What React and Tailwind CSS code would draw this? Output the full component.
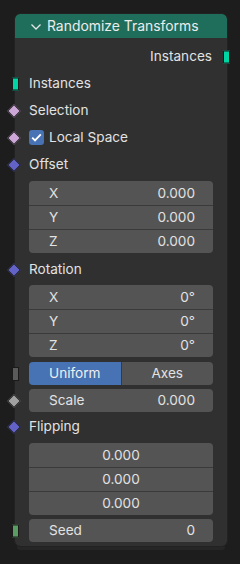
import React from "react";

const font = { fontFamily: "Inter, 'Noto Sans', sans-serif" };

function Diamond({ color }) {
  return (
    <span
      className={`absolute left-[-6px] top-1/2 -translate-y-1/2 w-[10px] h-[10px] rotate-45 border border-[#1a1a1a] ${color}`}
    />
  );
}

function RectSocket({ color, side = "left", h = "h-[13px]" }) {
  const pos = side === "left" ? "left-[-3px]" : "right-[-3px]";
  return (
    <span
      className={`absolute ${pos} top-1/2 -translate-y-1/2 w-[7px] ${h} border border-[#1a1a1a] ${color}`}
    />
  );
}

function LabelRow({ children, socket, mt = "" }) {
  return (
    <div className={`relative h-[27px] flex items-center pl-[14px] ${mt}`}>
      {socket}
      {children}
    </div>
  );
}

function VecBox({ rows, mt }) {
  return (
    <div className={`mx-[14px] ${mt} rounded-[4px] bg-[#545454] overflow-hidden`}>
      {rows.map((r, i) => (
        <div
          key={i}
          className={`h-[24px] flex items-center ${r.center ? "justify-center" : "justify-between pl-[20px] pr-[18px]"} ${i > 0 ? "border-t border-[#3a3a3a]" : ""}`}
        >
          {r.center ? (
            <span>{r.value}</span>
          ) : (
            <>
              <span>{r.label}</span>
              <span>{r.value}</span>
            </>
          )}
        </div>
      ))}
    </div>
  );
}

export default function App() {
  return (
    <div
      className="w-[240px] h-[564px] bg-[#1d1d1d] pt-[14px] pl-[15px] text-[13.6px] text-[#e2e2e2] overflow-hidden"
      style={font}
    >
      <div className="relative w-[212px] rounded-[5px] bg-[#303030] shadow-[0_6px_0_-2px_#262626] outline outline-1 outline-[#222]">
        {/* header */}
        <div className="h-[24px] rounded-t-[5px] bg-[#1f6e5b] flex items-center pl-[15px] text-[#ececec] text-[13.9px]">
          <svg width="12" height="8" viewBox="0 0 12 8" className="mr-[5px] mt-[1px]">
            <path d="M1.5 1.5 L6 6 L10.5 1.5" fill="none" stroke="#e6e6e6" strokeWidth="1.3" />
          </svg>
          <span>Randomize Transforms</span>
        </div>

        <div className="pt-[5px] pb-[4px]">
          {/* output */}
          <div className="relative h-[27px] flex items-center justify-end pr-[15px]">
            <span>Instances</span>
            <RectSocket color="bg-[#00d6a3]" side="right" />
          </div>

          <LabelRow socket={<RectSocket color="bg-[#00d6a3]" />}>
            <span>Instances</span>
          </LabelRow>
          <LabelRow socket={<Diamond color="bg-[#cca6d6]" />}>
            <span>Selection</span>
          </LabelRow>
          <LabelRow socket={<Diamond color="bg-[#cca6d6]" />}>
            <span className="w-[15px] h-[15px] rounded-[3px] bg-[#4772b3] flex items-center justify-center mr-[5px]">
              <svg width="11" height="9" viewBox="0 0 11 9">
                <path d="M1.2 4.6 L4 7.4 L9.8 1.4" fill="none" stroke="#fff" strokeWidth="1.8" />
              </svg>
            </span>
            <span>Local Space</span>
          </LabelRow>
          <LabelRow socket={<Diamond color="bg-[#6363c7]" />}>
            <span>Offset</span>
          </LabelRow>

          <VecBox
            mt="mt-[3px]"
            rows={[
              { label: "X", value: "0.000" },
              { label: "Y", value: "0.000" },
              { label: "Z", value: "0.000" },
            ]}
          />

          <LabelRow mt="mt-[3px]" socket={<Diamond color="bg-[#6363c7]" />}>
            <span>Rotation</span>
          </LabelRow>

          <VecBox
            mt="mt-[2px]"
            rows={[
              { label: "X", value: "0°" },
              { label: "Y", value: "0°" },
              { label: "Z", value: "0°" },
            ]}
          />

          {/* Uniform / Axes */}
          <div className="relative mt-[5px] h-[23px] px-[14px]">
            <RectSocket color="bg-[#5a5a5a]" h="h-[14px]" />
            <div className="flex h-full rounded-[4px] overflow-hidden">
              <div className="flex-1 bg-[#4772b3] flex items-center justify-center text-[#f0f0f0]">
                Uniform
              </div>
              <div className="flex-1 bg-[#545454] border-l border-[#3a3a3a] flex items-center justify-center">
                Axes
              </div>
            </div>
          </div>

          {/* Scale */}
          <div className="relative mt-[4px] h-[23px] px-[14px]">
            <Diamond color="bg-[#a1a1a1]" />
            <div className="h-full rounded-[4px] bg-[#545454] flex items-center justify-between pl-[20px] pr-[18px]">
              <span>Scale</span>
              <span>0.000</span>
            </div>
          </div>

          <LabelRow mt="mt-[1px]" socket={<Diamond color="bg-[#6363c7]" />}>
            <span>Flipping</span>
          </LabelRow>

          <VecBox
            mt="mt-[3px]"
            rows={[
              { center: true, value: "0.000" },
              { center: true, value: "0.000" },
              { center: true, value: "0.000" },
            ]}
          />

          {/* Seed */}
          <div className="relative mt-[4px] h-[23px] px-[14px]">
            <RectSocket color="bg-[#5a9c62]" />
            <div className="h-full rounded-[4px] bg-[#545454] flex items-center justify-between pl-[20px] pr-[18px]">
              <span>Seed</span>
              <span>0</span>
            </div>
          </div>
        </div>
      </div>
    </div>
  );
}
